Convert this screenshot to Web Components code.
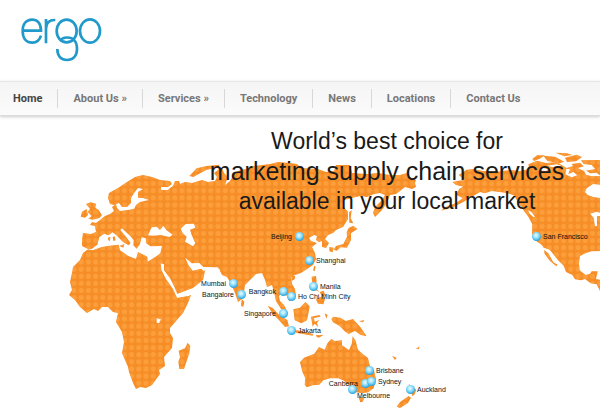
<!DOCTYPE html>
<html lang="en">
<head>
<meta charset="utf-8">
<title>ergo</title>
<style>
body { margin: 0; background: #fff; font-family: "Liberation Sans", Arial, sans-serif; }
</style>
</head>
<body>
<ergo-page></ergo-page>
<script>
function define(name, html, init) {
  const tpl = document.createElement('template');
  tpl.innerHTML = html;
  customElements.define(name, class extends HTMLElement {
    constructor() {
      super();
      this.attachShadow({ mode: 'open' }).append(tpl.content.cloneNode(true));
    }
    connectedCallback() { if (init) init(this); }
  });
}

define('ergo-logo', `
<style>
:host { display: flex; }
a { display: block; }
svg { display: block; width: 84px; height: 48px; }
</style>
<a href="#" aria-label="ergo home">
<svg viewBox="60 48 252 144" fill="none" stroke="#2199cb" stroke-width="8">
<path d="M68 92H123C123 70 112 59 96 59C79 59 68 72 68 93C68 115 79 128 97 128C111 128 119 120 123 107"/>
<path d="M138 57V130M138 86C138 68 148 59 166 60"/>
<ellipse cx="200" cy="93" rx="30" ry="34"/>
<ellipse cx="270" cy="93" rx="30" ry="35"/>
<path d="M182 122C187 110 213 109 223 121C231 129 231 138 231 147C231 168 219 180 201 180C183 180 172 168 172 147"/>
</svg></a>`);

define('nav-item', `
<style>
:host { display: flex; align-items: center; }
:host(:not(:last-of-type)) { border-right: 1px solid #d8d8d8; }
a { padding: 0 15px; color: var(--nav-color, #777); text-decoration: none; white-space: nowrap; }
:host(:first-of-type) a { padding-left: 13px; }
</style>
<a href="#"><slot></slot></a>`);

define('nav-bar', `
<style>
:host { display: block; }
nav { display: flex; box-sizing: border-box; height: 35px; padding: 7px 0;
  border-top: 1px solid #e6e6e6; border-bottom: 1px solid #dcdcdc;
  background: linear-gradient(#f5f5f5, #fbfbfb); box-shadow: 0 1px 3px #ccc;
  font: bold 11px/20px Roboto, "Liberation Sans", sans-serif; position: relative; z-index: 2; }
.current { --nav-color: #444; }
</style>
<nav aria-label="Main">
<nav-item class="current">Home</nav-item>
<nav-item>About Us »</nav-item>
<nav-item>Services »</nav-item>
<nav-item>Technology</nav-item>
<nav-item>News</nav-item>
<nav-item>Locations</nav-item>
<nav-item>Contact Us</nav-item>
</nav>`);

define('city-pin', `
<style>
:host { position: absolute; display: block; width: 0; height: 0; font-size: 7px; line-height: 8px; color: #111; }
i { position: absolute; left: -4px; top: -4px; width: 9px; height: 9px; border-radius: 50%;
  background: radial-gradient(circle at 45% 38%, #d4f5ff 0 12%, #7bd3f5 45%, #1b9fdc 75%, #1a8fcb); }
span { position: absolute; top: -3px; left: 7px; white-space: nowrap; }
:host([side=left]) span { left: auto; right: 7px; }
:host([side=below]) span { top: 3px; left: 5px; }
</style>
<i></i><span><slot></slot></span>`, el => {
  // Coordinates are those of the map's 600 x 303 canvas.
  el.style.left = el.getAttribute('x') / 600 * 100 + '%';
  el.style.top = el.getAttribute('y') / 303 * 100 + '%';
});

define('world-map', `
<style>
:host { display: block; position: relative; }
svg { display: block; width: 100%; height: auto; isolation: isolate; }
.dots { mix-blend-mode: lighten; }
</style>
<svg viewBox="0 116 600 303" fill="#f68d26" role="img" aria-label="World map">
<defs><pattern id="d" x="120.8" y="315.5" width="7.2" height="7.13" patternUnits="userSpaceOnUse"><circle cx="3.6" cy="3.6" r="2.6" fill="#fb9e3b"/></pattern></defs>
<rect y="116" width="600" height="303" fill="#fff"/>
<!-- Europe, Asia and Africa -->
<path d="M82 246L82 240L83 233L91 234L96 232L95 226L90 225L92 222L96 223L100 220L105 216L110 214L114 211L112 207L116 204L117 208L120 211L128 210L134 209L136 205L140 202L149 200L143 198L138 198L138 192L143 189L138 188L134 193L131 198L131 203L127 207L122 207L119 203L114 205L110 204L108 198L109 193L118 188L127 182L135 177L143 175L152 177L160 180L170 181L172 184L168 187L161 187L161 190L168 190L170 188L173 186L175 181L179 181L180 184L185 182L192 183L202 180L208 182L215 181L217 177L214 173L218 170L222 168L224 173L228 177L225 185L230 181L234 174L240 170L246 169L253 166L262 165L270 164L278 162L290 163L297 164L301 168L318 169L326 172L334 171L336 165L350 165L352 173L367 174L378 173L390 175L400 175L407 173L410 177L416 180L415 183L416 187L412 189L405 187L400 191L396 194L390 195L387 203L382 210L375 217L373 213L375 207L382 200L385 195L380 193L374 194L367 197L360 196L352 198L344 200L344 207L348 212L348 219L343 227L336 230L333 233L328 235L325 239L329 243L326 248L322 247L322 241L319 242L316 240L317 236L314 235L309 238L311 241L317 243L312 247L315 253L316 259L313 265L307 269L301 273L295 275L291 277L292 284L295 289L296 296L293 299L289 301L287 296L283 292L279 296L280 301L284 305L288 313L286 314L281 309L276 301L274 292L272 285L267 287L265 280L262 273L256 274L250 280L245 285L244 292L242 299L238 302L235 293L230 282L227 277L222 275L219 269L210 268L205 271L203 280L193 288L177 294L177 298L191 295L188 303L183 313L170 328L170 333L173 338L172 348L164 357L165 366L159 370L160 374L152 385L146 388L140 387L136 389L133 383L129 372L128 367L122 353L124 342L122 332L116 322L118 313L113 312L108 307L102 307L98 311L94 309L87 313L80 307L75 300L69 295L72 290L70 282L72 273L73 267L80 260L83 253L88 249Z"/>
<g transform="translate(60 120) scale(.33333)">
<path d="M78 252L92 247L108 251L106 263L116 270L126 286L118 294L98 299L85 296L95 288L83 276L90 266ZM66 275L80 267L84 285L75 293L62 290ZM388 168L410 145L440 138L478 134L476 143L440 149L415 163L400 171ZM278 229L290 232L286 237L278 235Z"/>
<g fill="#fff">
<path d="M58 402L66 386L95 387L112 374L118 352L132 341L145 346L158 337L171 347L188 365L206 376L212 369L199 352L181 330L186 325L213 350L221 361L220 376L230 386L240 372L245 352L257 355L259 370L271 379L306 378L301 400L287 410L263 425L262 410L234 396L228 417L205 408L180 391L176 374L148 377L125 381L98 391L84 388Z"/>
<path d="M264 346L275 322L290 320L300 330L310 317L319 330L338 344L328 351L302 345L280 347ZM362 326L377 312L402 311L406 323L390 329L395 345L406 370L399 379L375 365L380 350L368 340ZM376 413L395 430L418 429L430 441L473 442L481 452L430 452L424 446L398 452L385 435ZM302 430L312 433L312 451L330 475L343 500L352 522L395 523L385 528L350 532L339 507L318 477L304 449ZM290 595L303 598L297 610L290 608Z"/>
</g>
<path d="M144 353L151 350L150 363L144 360ZM158 351L164 349L167 361L160 363ZM178 378L193 372L190 383ZM383 668L391 678L388 700L372 747L358 747L355 725L360 712L356 692L375 685ZM545 537L553 545L550 560L543 558Z"/>
</g>
<!-- Japan, Sakhalin and islands of South-East Asia -->
<g transform="translate(200 220) scale(.33333)">
<path d="M447 -23L455 -30L452 -5L460 10L448 8ZM446 24L460 17L472 27L453 40L453 60L441 83L422 82L410 92L401 89L408 78L430 72L441 50L440 36ZM388 81L401 83L398 97L388 94ZM343 137L347 140L344 154L339 151ZM274 168L286 168L284 178L275 183ZM335 170L348 168L350 184L345 200L358 216L347 210L337 199ZM359 216L371 212L376 225L367 232ZM348 239L365 229L375 238L370 253L354 251ZM203 257L218 264L240 287L262 300L267 319L255 321L236 299L218 281ZM280 268L300 263L316 246L329 259L326 277L321 301L304 310L284 301ZM333 290L358 285L362 290L342 294L344 305L358 300L351 309L355 322L344 311L338 320ZM279 329L300 332L340 342L338 347L290 339ZM348 345L371 345L356 353L350 350ZM374 280L383 285L379 296ZM400 290L421 293L437 303L459 297L481 321L500 349L482 345L465 333L446 342L434 334L419 318L399 307L394 297ZM477 304L493 300L489 307Z"/>
</g>
<!-- Australia, New Zealand -->
<g transform="translate(260 310) scale(.33333)">
<path d="M120 157L132 143L163 131L177 111L194 119L203 98L214 87L224 93L246 91L246 106L267 120L275 102L278 79L287 92L294 119L309 133L324 144L329 165L342 181L348 207L341 235L324 247L306 250L286 246L272 230L258 219L252 212L235 205L210 205L190 211L178 224L158 226L140 232L134 224L136 205L127 185ZM295 260L313 263L308 275L301 277ZM396 137L410 144L405 150ZM468 116L479 109L476 118ZM446 221L455 229L469 239L464 253L457 259L454 243ZM446 258L453 263L444 279L420 294L410 290L420 276Z"/>
</g>
<!-- North America -->
<g transform="translate(400 120) scale(.33333)">
<path d="M157 186L177 182L195 180L176 165L200 149L220 147L248 153L290 155L330 150L360 153L388 147L385 133L411 122L438 129L470 126L500 144L520 138L552 153L606 144V195L579 192L560 205L555 216L563 225L580 231L606 235V393L575 394L558 399L540 408L537 429L539 451L557 465L570 461L575 454L593 454L588 477L606 480V525L590 493L572 490L555 477L543 481L525 478L517 465L498 456L491 437L473 419L449 389L431 383L425 374L405 361L396 342L397 313L385 290L367 266L353 244L340 225L315 218L275 213L255 220L240 216L208 235L186 248L155 263L123 272L136 261L168 249L188 235L169 224L178 206L190 200L168 195Z"/>
<path d="M397 117L411 106L435 106L422 115L402 123ZM430 107L465 110L493 125L479 130L442 123ZM466 98L501 100L517 105L493 109ZM495 113L530 104L546 111L528 124L501 126ZM543 121L606 120V154L588 150L575 135L551 132ZM515 132L540 128L551 139L525 147ZM432 390L445 400L460 427L473 434L469 439L450 423L434 402Z"/>
<path d="M415 150L426 143L446 148L437 154ZM499 146L510 148L505 162L520 156L532 166L515 172L496 163ZM548 145L570 160L590 158L602 168L576 169L558 164ZM570 281L590 275L606 280V287L591 289V318L585 319L581 293ZM384 271L394 275L405 290L400 291L389 281ZM440 137L470 133L485 138L460 142Z" fill="#fff"/>
</g>
<rect class="dots" y="116" width="600" height="303" fill="url(#d)"/>
</svg>
<city-pin x="299" y="120" side="left">Beijing</city-pin>
<city-pin x="309" y="144">Shanghai</city-pin>
<city-pin x="233" y="167" side="left">Mumbai</city-pin>
<city-pin x="241" y="178" side="left">Bangalore</city-pin>
<city-pin x="283" y="175" side="left">Bangkok</city-pin>
<city-pin x="291" y="180">Ho Chi Minh City</city-pin>
<city-pin x="313" y="170">Manila</city-pin>
<city-pin x="283" y="197" side="left">Singapore</city-pin>
<city-pin x="291" y="214">Jakarta</city-pin>
<city-pin x="536" y="120">San Francisco</city-pin>
<city-pin x="369" y="254">Brisbane</city-pin>
<city-pin x="365" y="267" side="left">Canberra</city-pin>
<city-pin x="371" y="265">Sydney</city-pin>
<city-pin x="352" y="273" side="below">Melbourne</city-pin>
<city-pin x="410" y="273">Auckland</city-pin>`);

define('hero-banner', `
<style>
:host { display: grid; }
world-map, h1 { grid-area: 1 / 1; }
h1 { margin: 0; padding: 10px 0 0 29%; z-index: 1; align-self: start; text-align: center;
  font-weight: 300; font-size: 23px; line-height: 30px; color: #1a1a1a; }
span { display: block; white-space: nowrap; }
.wide { font-size: 25px; }
</style>
<world-map></world-map>
<h1><span>World’s best choice for</span><span class="wide">marketing supply chain services</span><span>available in your local market</span></h1>`);

define('ergo-page', `
<style>
:host { display: block; overflow: hidden; }
header { padding: 16px 20px 17px; }
</style>
<header><ergo-logo></ergo-logo></header>
<nav-bar></nav-bar>
<main><hero-banner></hero-banner></main>`);
</script>
</body>
</html>
